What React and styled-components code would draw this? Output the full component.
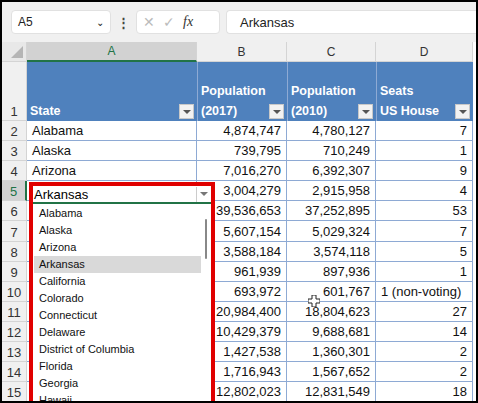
import React from 'react'
import styled, { createGlobalStyle } from 'styled-components'

const Global = createGlobalStyle`
  html, body { margin: 0; padding: 0; background: #fff; }
  body { font-family: "Liberation Sans", Arial, sans-serif; }
`

const Frame = styled.div`
  width: 478px;
  height: 403px;
  box-sizing: border-box;
  border: 2px solid #000;
  overflow: hidden;
  position: relative;
  background: #fff;
`

const Toolbar = styled.div`
  height: 40px;
  background: #f0f0f0;
  display: flex;
  align-items: center;
  gap: 6px;
  padding: 0 0 0 9px;
`

const NameBox = styled.div`
  width: 100px;
  height: 24px;
  box-sizing: border-box;
  background: #fff;
  border: 1px solid #e1e1e1;
  border-radius: 4px;
  display: flex;
  align-items: center;
  justify-content: space-between;
  padding: 0 6px;
  font-size: 12px;
  color: #222;
`

const Dots = styled.div`
  font-size: 13px;
  color: #444;
  font-weight: bold;
`

const FxBox = styled.div`
  width: 84px;
  height: 24px;
  box-sizing: border-box;
  background: #fff;
  border: 1px solid #e1e1e1;
  border-radius: 4px;
  display: flex;
  align-items: center;
  gap: 8px;
  padding: 0 6px;
  color: #bbb;
  font-size: 14px;
`

const Formula = styled.div`
  flex: 1;
  height: 24px;
  box-sizing: border-box;
  background: #fff;
  border: 1px solid #e1e1e1;
  border-right: none;
  border-radius: 4px 0 0 4px;
  display: flex;
  align-items: center;
  padding-left: 13px;
  font-size: 13px;
  color: #222;
`

const Grid = styled.div`
  display: grid;
  grid-template-columns: 25px 170px 90px 89px 97px;
  grid-template-rows: 20px 59px repeat(14, 20.1px);
`

const Corner = styled.div`
  background: #e8e8e8;
  border-right: 1px solid #d4d4d4;
  border-bottom: 1px solid #d4d4d4;
  position: relative;
  &::after {
    content: '';
    position: absolute;
    right: 3px;
    bottom: 3px;
    border-left: 12px solid transparent;
    border-bottom: 12px solid #b5b5b5;
  }
`

const ColHead = styled.div`
  background: ${p => (p.$sel ? '#d2d2d2' : '#f0f0f0')};
  border-right: 1px solid #d4d4d4;
  border-bottom: ${p => (p.$sel ? '2px solid #217346' : '1px solid #d4d4d4')};
  color: ${p => (p.$sel ? '#217346' : '#333')};
  font-size: 12px;
  display: flex;
  align-items: center;
  justify-content: center;
`

const RowHead = styled.div`
  background: ${p => (p.$sel ? '#d2d2d2' : '#f0f0f0')};
  border-bottom: 1px solid #d4d4d4;
  border-right: ${p => (p.$sel ? '2px solid #217346' : '1px solid #d4d4d4')};
  color: ${p => (p.$sel ? '#217346' : '#333')};
  font-size: 13px;
  display: flex;
  align-items: flex-end;
  justify-content: center;
  padding-bottom: 1px;
`

const HeadCell = styled.div`
  background: #4f81bd;
  color: #fff;
  font-weight: bold;
  font-size: 12.5px;
  line-height: 20px;
  padding: 0 3px;
  display: flex;
  align-items: flex-end;
  justify-content: space-between;
  border-left: ${p => (p.$first ? 'none' : '1px solid #8eaad4')};
`

const FilterBtn = styled.div`
  width: 15px;
  height: 15px;
  margin-bottom: 2px;
  background: #f2f2f2;
  border: 1px solid #c8c8c8;
  box-sizing: border-box;
  display: flex;
  align-items: center;
  justify-content: center;
  flex-shrink: 0;
  &::after {
    content: '';
    border-left: 4px solid transparent;
    border-right: 4px solid transparent;
    border-top: 4px solid #555;
  }
`

const Cell = styled.div`
  border-bottom: 1px solid #8eaad4;
  border-right: 1px solid #8eaad4;
  font-size: 13px;
  color: #111;
  padding: 0 5px;
  display: flex;
  align-items: center;
  justify-content: ${p => (p.$left ? 'flex-start' : 'flex-end')};
  white-space: nowrap;
`

const Dropdown = styled.div`
  position: absolute;
  left: 27px;
  top: 180px;
  width: 186px;
  height: 230px;
  box-sizing: border-box;
  border: 4px solid #e00000;
  background: #fff;
  overflow: hidden;
`

const ActiveCell = styled.div`
  height: 16px;
  display: flex;
  align-items: center;
  justify-content: space-between;
  font-size: 13px;
  padding-left: 1px;
  border-bottom: 2px solid #217346;
`

const ArrowBtn = styled.div`
  width: 14px;
  height: 15px;
  border-left: 1px solid #ccc;
  display: flex;
  align-items: center;
  justify-content: center;
  &::after {
    content: '';
    border-left: 4px solid transparent;
    border-right: 4px solid transparent;
    border-top: 4px solid #777;
  }
`

const List = styled.div`
  display: flex;
  margin-top: 1px;
`

const Items = styled.div`
  flex: 1;
  margin-left: 1px;
`

const Item = styled.div`
  height: 17px;
  line-height: 17px;
  font-size: 11px;
  padding-left: 5px;
  color: #111;
  overflow: hidden;
  background: ${p => (p.$hl ? '#d9d9d9' : 'transparent')};
`

const Scroll = styled.div`
  width: 10px;
  display: flex;
  justify-content: center;
  padding-top: 14px;
  &::before {
    content: '';
    width: 2px;
    height: 40px;
    background: #888;
    border-radius: 1px;
  }
`

const Cursor = styled.div`
  position: absolute;
  left: 306px;
  top: 291px;
  width: 12px;
  height: 12px;
`

const rows = [
  ['Alabama', '4,874,747', '4,780,127', '7'],
  ['Alaska', '739,795', '710,249', '1'],
  ['Arizona', '7,016,270', '6,392,307', '9'],
  ['Arkansas', '3,004,279', '2,915,958', '4'],
  ['California', '39,536,653', '37,252,895', '53'],
  ['Colorado', '5,607,154', '5,029,324', '7'],
  ['Connecticut', '3,588,184', '3,574,118', '5'],
  ['Delaware', '961,939', '897,936', '1'],
  ['District of Columbia', '693,972', '601,767', '1 (non-voting)'],
  ['Florida', '20,984,400', '18,804,623', '27'],
  ['Georgia', '10,429,379', '9,688,681', '14'],
  ['Hawaii', '1,427,538', '1,360,301', '2'],
  ['Idaho', '1,716,943', '1,567,652', '2'],
  ['Illinois', '12,802,023', '12,831,549', '18'],
]

const states = ['Alabama', 'Alaska', 'Arizona', 'Arkansas', 'California', 'Colorado', 'Connecticut', 'Delaware', 'District of Columbia', 'Florida', 'Georgia', 'Hawaii']

export default function App() {
  return (
    <Frame>
      <Global />
      <Toolbar>
        <NameBox>A5 <span style={{ fontSize: 10 }}>⌄</span></NameBox>
        <Dots>⋮</Dots>
        <FxBox>
          <span>✕</span><span>✓</span>
          <span style={{ color: '#333', fontStyle: 'italic', fontFamily: '"Liberation Serif", serif' }}>fx</span>
        </FxBox>
        <Formula>Arkansas</Formula>
      </Toolbar>
      <Grid>
        <Corner />
        <ColHead $sel>A</ColHead>
        <ColHead>B</ColHead>
        <ColHead>C</ColHead>
        <ColHead>D</ColHead>
        <RowHead>1</RowHead>
        <HeadCell $first>State<FilterBtn /></HeadCell>
        <HeadCell><span>Population<br />(2017)</span><FilterBtn /></HeadCell>
        <HeadCell><span>Population<br />(2010)</span><FilterBtn /></HeadCell>
        <HeadCell><span>Seats<br />US House</span><FilterBtn /></HeadCell>
        {rows.map((r, i) => (
          <React.Fragment key={i}>
            <RowHead $sel={i === 3}>{i + 2}</RowHead>
            <Cell $left>{r[0]}</Cell>
            <Cell>{r[1]}</Cell>
            <Cell>{r[2]}</Cell>
            <Cell $left={r[3].length > 3}>{r[3]}</Cell>
          </React.Fragment>
        ))}
      </Grid>
      <Dropdown>
        <ActiveCell>Arkansas<ArrowBtn /></ActiveCell>
        <List>
          <Items>
            {states.map(s => <Item key={s} $hl={s === 'Arkansas'}>{s}</Item>)}
          </Items>
          <Scroll />
        </List>
      </Dropdown>
      <Cursor>
        <svg width="12" height="12" viewBox="0 0 12 12">
          <path d="M4 0h4v4h4v4H8v4H4V8H0V4h4z" fill="#fff" stroke="#222" strokeWidth="1" />
        </svg>
      </Cursor>
    </Frame>
  )
}
